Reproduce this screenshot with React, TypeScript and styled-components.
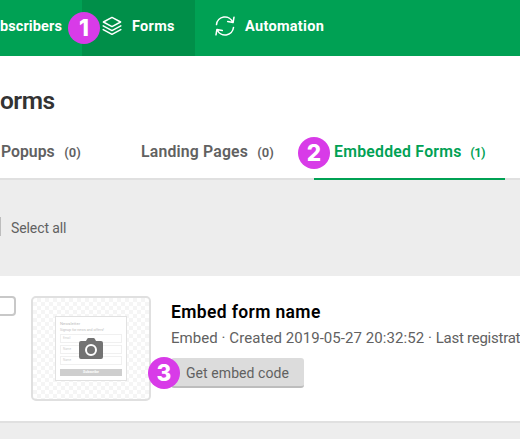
import React from 'react';
import styled, { createGlobalStyle } from 'styled-components';

const GlobalStyle = createGlobalStyle`
  *, *::before, *::after { box-sizing: border-box; }
  body { margin: 0; background: #ededed; overflow: hidden; font-family: Roboto, "Liberation Sans", sans-serif; color: #616161; }
`;

const Page = styled.div`
  width: 520px;
  height: 439px;
  overflow: hidden;
  background: #ededed;
`;

const NavBar = styled.nav`
  display: flex;
  height: 56px;
  background: #00a154;
`;

const NavItem = styled.a<{ $active?: boolean; $width: number }>`
  position: relative;
  flex: none;
  display: flex;
  align-items: center;
  gap: 10px;
  width: ${(p) => p.$width}px;
  height: 56px;
  padding: 0 20px 4px;
  background: ${(p) => (p.$active ? '#008f49' : 'transparent')};
  color: #fff;
  font-size: 14.5px;
  font-weight: 700;
  letter-spacing: 0.3px;
  line-height: 20px;
  white-space: nowrap;
  &:first-child { padding-left: 0; letter-spacing: 0.1px; }
  svg { flex: none; }
`;

const NavLabel = styled.span`
  padding-top: 2px;
`;

const Step = styled.b<{ $left: number; $top: number }>`
  position: absolute;
  z-index: 2;
  left: ${(p) => p.$left}px;
  top: ${(p) => p.$top}px;
  display: flex;
  align-items: center;
  justify-content: center;
  width: 32px;
  height: 32px;
  border-radius: 50%;
  background: #d83be8;
  color: #fff;
  font: 800 22.5px/32px Inter, "Liberation Sans", sans-serif;
  letter-spacing: 0;
`;

const Header = styled.header`
  height: 124px;
  background: #fff;
  display: flex;
  flex-direction: column;
  justify-content: space-between;
`;

const Title = styled.h1`
  margin: 0;
  padding-top: 29px;
  color: #333;
  font-size: 24.5px;
  font-weight: 600;
  letter-spacing: -0.5px;
  line-height: 32px;
`;

const Tabs = styled.div`
  display: flex;
  gap: 20px;
  height: 54px;
  border-bottom: 2px solid #e0e0e0;
`;

const Tab = styled.a<{ $width: number; $active?: boolean }>`
  position: relative;
  flex: none;
  display: flex;
  align-items: baseline;
  justify-content: space-between;
  width: ${(p) => p.$width}px;
  height: 54px;
  padding: 16px 20px 0;
  border-bottom: 2px solid ${(p) => (p.$active ? '#00a154' : 'transparent')};
  color: ${(p) => (p.$active ? '#00a154' : '#616161')};
  font-size: 15.8px;
  font-weight: 600;
  letter-spacing: ${(p) => (p.$active ? '0.25px' : '0.18px')};
  line-height: 20px;
  white-space: nowrap;
  &:first-child { padding-left: 1px; letter-spacing: 0; }
`;

const Count = styled.span<{ $tight?: boolean }>`
  font-size: 13px;
  letter-spacing: ${(p) => (p.$tight ? '-0.6px' : '0.1px')};
`;

const SelectBar = styled.div`
  display: flex;
  align-items: center;
  gap: 10px;
  height: 96px;
  font-size: 14px;
  letter-spacing: -0.1px;
`;

const SelectBox = styled.i`
  width: 1px;
  height: 19px;
  margin-top: -3px;
  background: #bdbdbd;
`;

const Card = styled.section`
  display: flex;
  height: 147px;
  padding-top: 20px;
  background: #fff;
  border-bottom: 2px solid #e0e0e0;
`;

const CheckBox = styled.i`
  flex: none;
  width: 16px;
  height: 20px;
  margin-right: 15px;
  border: 2px solid #c8c8c8;
  border-left: 0;
  border-radius: 0 4px 4px 0;
`;

const Preview = styled.div`
  flex: none;
  display: flex;
  align-items: center;
  justify-content: center;
  width: 120px;
  height: 105px;
  border: 2px solid #e0e0e0;
  border-radius: 5px;
  background: repeating-conic-gradient(#f5f5f5 0 25%, #fff 0 50%) 0 0 / 8px 8px;
`;

const MiniForm = styled.div`
  position: relative;
  display: flex;
  flex-direction: column;
  width: 72px;
  height: 65px;
  padding: 4px;
  border: 1px solid #e2e2e2;
  background: #fff;
  color: #bdbdbd;
  font-size: 3.6px;
  line-height: 6px;
`;

const MiniTitle = styled.div`
  font-size: 4.2px;
  line-height: 5px;
`;

const MiniText = styled.div`
  height: 8px;
  line-height: 8px;
`;

const MiniField = styled.div`
  height: 9px;
  margin-bottom: 2px;
  padding-left: 2px;
  border: 1px solid #f0f0f0;
  color: #cfcfcf;
  font-size: 3px;
`;

const MiniButton = styled.div`
  height: 7px;
  margin-top: 2px;
  background: #cecece;
  color: #fff;
  font-size: 3.5px;
  font-weight: 700;
  line-height: 7px;
  text-align: center;
`;

const Camera = styled.svg`
  position: absolute;
  left: 23px;
  top: 21px;
`;

const Details = styled.div`
  display: flex;
  flex-direction: column;
  align-items: flex-start;
  padding-left: 20px;
  white-space: nowrap;
`;

const FormName = styled.h2`
  margin: 6px 0 0;
  color: #000;
  font-size: 17.5px;
  font-weight: 600;
  letter-spacing: 0.36px;
  line-height: 20px;
`;

const Meta = styled.p`
  margin: 6px 0 10px;
  font-size: 15px;
  letter-spacing: 0.06px;
  line-height: 20px;
`;

const Registration = styled.span`
  letter-spacing: -0.25px;
`;

const CodeButton = styled.button`
  position: relative;
  width: 133px;
  height: 30px;
  padding: 2px 0 0 15px;
  border: 0;
  border-bottom: 2px solid #bdbdbd;
  border-radius: 3px;
  background: #dcdcdc;
  color: #616161;
  font: 400 14px/26px Roboto, "Liberation Sans", sans-serif;
  letter-spacing: 0.07px;
  text-align: left;
`;

const LayersIcon = () => (
  <svg width="20" height="20" viewBox="0 0 20 20" fill="none" stroke="#fff" strokeWidth="1.5" strokeLinejoin="round" strokeLinecap="round">
    <path d="M10 1.4 18.6 6 10 10.6 1.4 6Z" />
    <path d="M1.2 9.9 10 14.6l8.8-4.7M1.2 13.6 10 18.3l8.8-4.7" />
  </svg>
);

const SyncIcon = () => (
  <svg width="20" height="20" viewBox="0 0 20 20" fill="none" stroke="#fff" strokeWidth="1.5" strokeLinejoin="round" strokeLinecap="round">
    <path d="M1.5 8.6A8.5 8.5 0 0 1 17.8 6.2M19 1.2l-.9 5.3-5.4-1" />
    <path d="M18.5 11.4A8.5 8.5 0 0 1 2.2 13.8M1 18.8l.9-5.3 5.4 1" />
  </svg>
);

export default function App() {
  return (
    <Page>
      <GlobalStyle />
      <NavBar>
        <NavItem $width={82}><NavLabel>bscribers</NavLabel></NavItem>
        <NavItem $width={113} $active>
          <Step $left={-14} $top={12}>1</Step>
          <LayersIcon />
          <NavLabel>Forms</NavLabel>
        </NavItem>
        <NavItem $width={150}>
          <SyncIcon />
          <NavLabel>Automation</NavLabel>
        </NavItem>
      </NavBar>
      <Header>
        <Title>orms</Title>
        <Tabs>
          <Tab $width={101}>Popups <Count>(0)</Count></Tab>
          <Tab $width={173}>Landing Pages <Count>(0)</Count></Tab>
          <Tab $width={191} $active>
            <Step $left={-16} $top={11}>2</Step>
            Embedded Forms <Count $tight>(1)</Count>
          </Tab>
        </Tabs>
      </Header>
      <SelectBar><SelectBox />Select all</SelectBar>
      <Card>
        <CheckBox />
        <Preview>
          <MiniForm>
            <MiniTitle>Newsletter</MiniTitle>
            <MiniText>Signup for news and offers!</MiniText>
            <MiniField>Email</MiniField>
            <MiniField>Name</MiniField>
            <MiniField>Name</MiniField>
            <MiniButton>Subscribe</MiniButton>
            <Camera width="24" height="21" viewBox="0 0 24 21">
              <path fill="#737373" d="M7 3 8.2.7Q8.6 0 9.4 0h5.2q.8 0 1.2.7L17 3h5q2 0 2 2v14q0 2-2 2H2q-2 0-2-2V5q0-2 2-2Z" />
              <circle cx="12" cy="12" r="5" fill="none" stroke="#fff" strokeWidth="2" />
            </Camera>
          </MiniForm>
        </Preview>
        <Details>
          <FormName>Embed form name</FormName>
          <Meta>Embed · Created 2019-05-27 20:32:52 · <Registration>Last registrat</Registration></Meta>
          <CodeButton>
            <Step $left={-23} $top={-1}>3</Step>
            Get embed code
          </CodeButton>
        </Details>
      </Card>
    </Page>
  );
}
